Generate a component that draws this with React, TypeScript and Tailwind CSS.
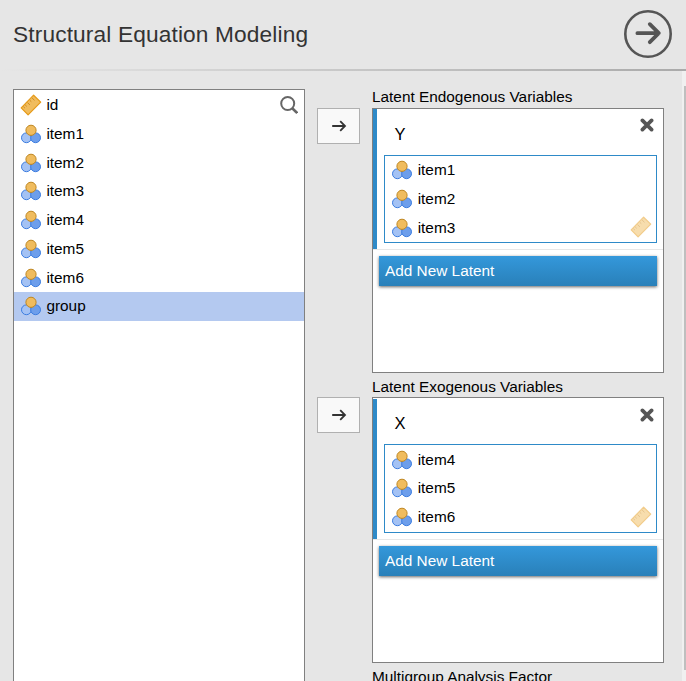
import React from "react";

function NominalIcon() {
  return (
    <svg width="20" height="20" viewBox="0 0 20 20" className="shrink-0">
      <circle cx="5.4" cy="13.8" r="4.9" fill="#a4c2f4" stroke="#3c7de0" strokeWidth="1" />
      <circle cx="14.6" cy="13.8" r="4.9" fill="#6d9eeb" stroke="#3c7de0" strokeWidth="1" />
      <circle cx="10" cy="6.3" r="5.1" fill="#f0bc5e" stroke="#bf8620" strokeWidth="1" />
    </svg>
  );
}

function RulerIcon({ className = "" }: { className?: string }) {
  return (
    <svg width="22" height="22" viewBox="0 0 22 22" className={"shrink-0 " + className}>
      <path d="M13.6 1.2 L20.7 8.1 L8.1 20.9 L1.2 13.9 Z" fill="#f0bc5e" stroke="#e69a17" strokeWidth="1.2" strokeLinejoin="round" />
      <path d="M12.1 4 l2.4 2.3 M9.8 6.3 l1.5 1.4 M7.5 8.6 l2.4 2.3 M5.2 10.9 l1.5 1.4 M3.4 12.7 l1.5 1.4" stroke="#cf8a1c" strokeWidth="1" />
    </svg>
  );
}

const items = ["item1", "item2", "item3", "item4", "item5", "item6", "group"];

function AssignButton() {
  return (
    <button className="flex h-9 w-[43px] items-center justify-center border border-[#b0b0b0] bg-[#f9f9f9]">
      <svg width="16" height="14" viewBox="0 0 16 14" fill="none" stroke="#333" strokeWidth="1.8">
        <path d="M1.2 7 H14 M9.2 2.2 L14 7 L9.2 11.8" />
      </svg>
    </button>
  );
}

type PanelProps = { name: string; vars: string[]; second?: boolean };

function LatentPanel({ name, vars, second = false }: PanelProps) {
  return (
    <section className={"w-[292px] shrink-0 border border-[#808080] bg-white " + (second ? "h-[266px] pt-px" : "h-[265px]")}>
      <div className="h-[141px] border-b border-[#e8e8e8]">
        <div className="h-[140px] w-full border-l-4 border-[#2e8ac8] pl-[7px] pr-1.5">
          <div className={"flex justify-between " + (second ? "h-[45px]" : "h-[46px]")}>
            <span className={"pl-[10.5px] text-[16.5px] leading-6 " + (second ? "pt-3" : "pt-[13px]")}>{name}</span>
            <svg width="14" height="14" viewBox="0 0 14 14" className="mr-[3.5px] mt-[9px]">
              <path d="M2.4 2.4 L11.6 11.6 M11.6 2.4 L2.4 11.6" stroke="#555" strokeWidth="3.7" strokeLinecap="round" />
            </svg>
          </div>
          <div className={"relative border border-[#2e8ac8] " + (second ? "h-[89px] pt-[0.6px]" : "h-[88px]")}>
            {vars.map((v) => (
              <div key={v} className={"flex items-center gap-[5.7px] pl-[7px] " + (second ? "h-[28.5px]" : "h-[28.8px]")}>
                <NominalIcon />
                <span>{v}</span>
              </div>
            ))}
            <RulerIcon className="absolute bottom-1 right-[4px] opacity-50" />
          </div>
        </div>
      </div>
      <button className="ml-1.5 mt-1.5 flex h-[30px] w-[278px] items-center bg-linear-to-b from-[#3498db] to-[#2980b9] pl-1.5 text-white shadow-[0_1px_3px_#666]">
        Add New Latent
      </button>
    </section>
  );
}

export default function App() {
  return (
    <div className="flex h-[681px] w-[686px] flex-col overflow-hidden bg-[#e6e6e6] font-['Liberation_Sans',Arial,sans-serif] text-[15.36px] leading-[18px] text-black">
      <header className="flex h-[69px] shrink-0 items-center justify-between pb-px pl-[13px] pr-[14px]">
        <h1 className="text-[22.7px] leading-7 tracking-[0.14px] text-[#333]">Structural Equation Modeling</h1>
        <svg width="48" height="48" viewBox="0 0 48 48" fill="none" stroke="#555">
          <circle cx="24" cy="24" r="22.7" strokeWidth="2.6" />
          <path d="M13.4 23.2 H34.5 M25.8 14.2 L34.8 23.2 L25.8 32.2" strokeWidth="3.8" strokeLinecap="round" strokeLinejoin="round" />
        </svg>
      </header>
      <div className="h-0.5 shrink-0 bg-linear-to-r from-[#e6e6e6] to-[#aaa]" />
      <main className="flex min-h-0 flex-1">
        <div className="ml-[13px] mt-[18px] h-[620px] w-[292px] shrink-0 border border-[#808080] bg-white pt-[0.6px]">
          <div className="flex h-[28.77px] items-center pl-1.5 pr-1.5">
            <RulerIcon />
            <span className="ml-[4.4px] flex-1">id</span>
            <svg width="18" height="18" viewBox="0 0 18 18" fill="none" stroke="#666">
              <circle cx="7.7" cy="7.5" r="6.5" strokeWidth="2" />
              <path d="M12 12 L17.2 17" strokeWidth="2.6" />
            </svg>
          </div>
          {items.map((name) => (
            <div key={name} className={"flex h-[28.77px] items-center gap-[5.4px] pl-[7px] " + (name === "group" ? "bg-[#b4c9f0]" : "")}>
              <NominalIcon />
              <span>{name}</span>
            </div>
          ))}
        </div>
        <div className="ml-3 mt-[37px] flex w-[43px] shrink-0 flex-col gap-[253px]">
          <AssignButton />
          <AssignButton />
        </div>
        <div className="ml-3 flex w-[292px] shrink-0 flex-col pt-[17px]">
          <h2 className="h-5 shrink-0">Latent Endogenous Variables</h2>
          <LatentPanel name="Y" vars={["item1", "item2", "item3"]} />
          <h2 className="h-6 shrink-0 pt-[5px]">Latent Exogenous Variables</h2>
          <LatentPanel name="X" vars={["item4", "item5", "item6"]} second />
          <h2 className="h-6 shrink-0 pt-[5px]">Multigroup Analysis Factor</h2>
        </div>
        <div className="ml-auto w-1 bg-[#f0f0f0] pl-0.5 pt-[15px]">
          <div className="h-[584px] w-0.5 bg-[#bfbfbf]" />
        </div>
      </main>
    </div>
  );
}
